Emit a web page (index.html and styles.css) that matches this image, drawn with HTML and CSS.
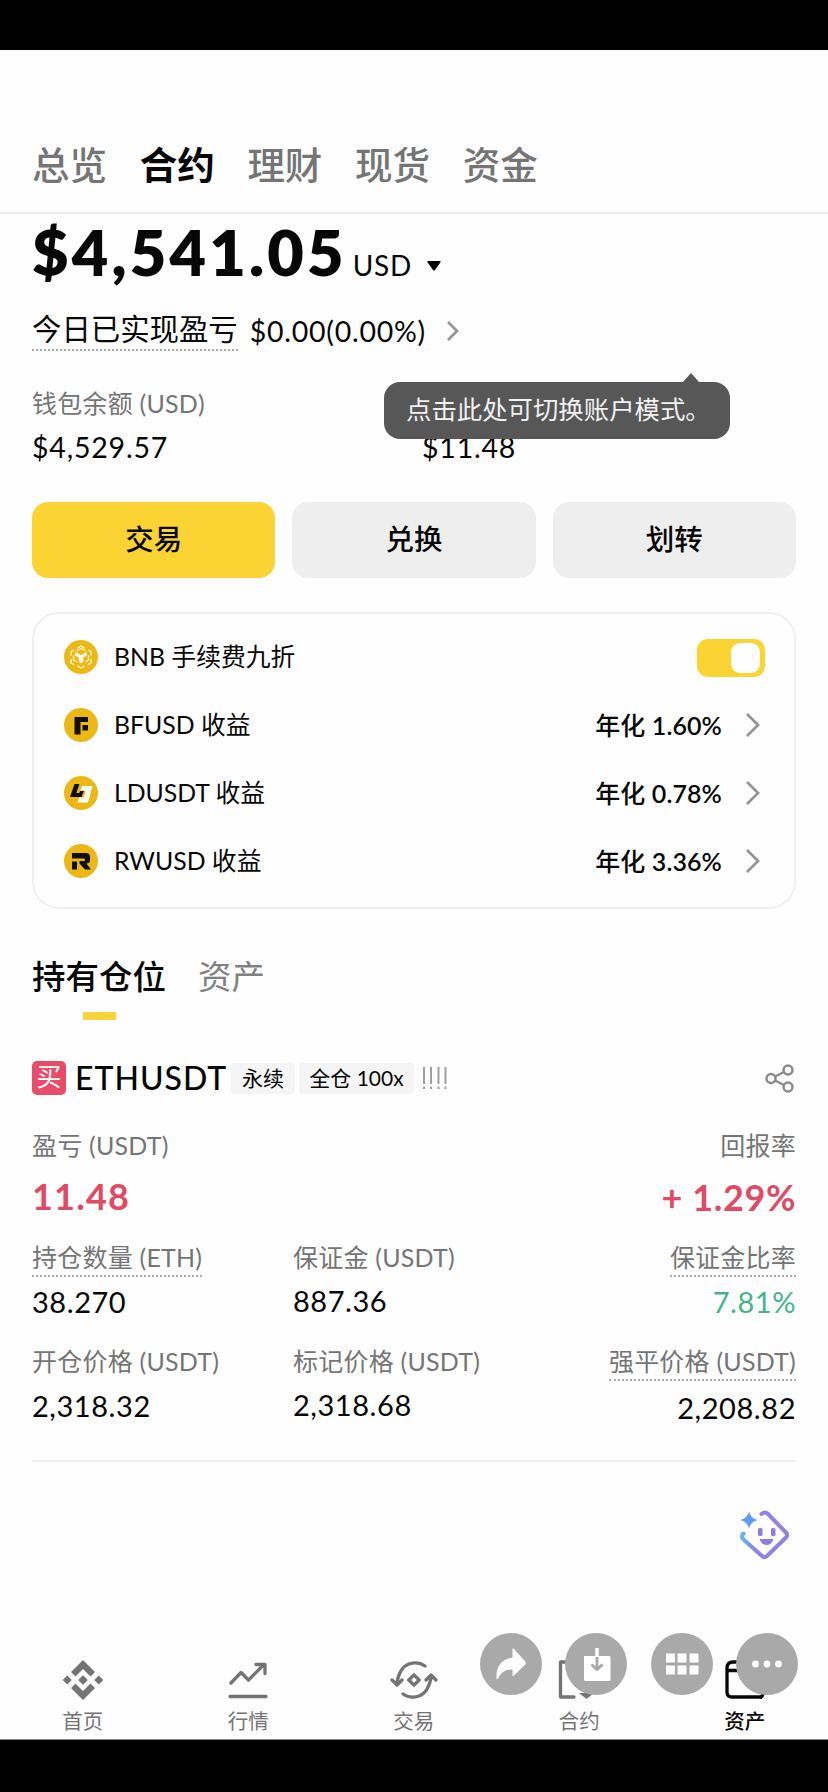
FILE: index.html
```html
<!DOCTYPE html>
<html lang="zh-CN">
<head>
<meta charset="utf-8">
<title>合约资产</title>
<link rel="stylesheet" href="styles.css">
</head>
<body>
<div class="screen">
  <div class="letterbox letterbox-top"></div>
  <header class="tabs">
    <span>总览</span><span class="on">合约</span><span>理财</span><span>现货</span><span>资金</span>
  </header>

  <main class="content">
    <div class="amount"><b>$4,541.05</b><span>USD</span><svg width="14" height="10" viewBox="0 0 14 10"><path d="M1.5 0h11q2 0 .8 1.6L8 9q-1 1.200-2 0L.7 1.600Q-.5 0 1.500 0z"/></svg></div>

    <div class="pnl">
      <span class="dotted">今日已实现盈亏</span><span class="pnl-value">$0.00(0.00%)</span>
      <svg width="14" height="22" viewBox="0 0 14 22" class="chev"><path d="M2 2l9 9-9 9"/></svg>
    </div>

    <section class="balances">
      <div><p class="label">钱包余额 (USD)</p><p class="num">$4,529.57</p></div>
      <div><p class="label">&nbsp;</p><p class="num">$11.48</p></div>
      <div class="tip">点击此处可切换账户模式。</div>
    </section>

    <div class="actions"><button class="primary">交易</button><button>兑换</button><button>划转</button></div>

    <section class="card">
      <div class="row">
        <svg width="34" height="34" viewBox="0 0 34 34"><circle cx="17" cy="17" r="17" fill="#ecb816"/><g fill="none" stroke="#fff3c4" stroke-width="1.400" stroke-linejoin="round"><path d="M13 8.300L17 6l4 2.300M24 10l3 1.700v4M27 19v4l-3 1.700M20.500 26L17 28l-3.500-2M10 24.700L7 23v-4M7 15.700v-4L10 10"/><path d="M12.500 11L17 8.500l4.500 2.500M9.500 15.500v4.500l3 1.800M24.500 15.500v4.500l-3 1.800"/></g><path d="M11 12l3 1.300 3 1.700 3-1.700 3-1.300v3.600l-3.700 2.200v4.300L17 23.600l-2.300-1.500v-4.300L11 15.600z" fill="#fff8dd"/></svg>
        <span class="name">BNB 手续费九折</span><i class="switch"></i>
      </div>
      <div class="row">
        <svg width="34" height="34" viewBox="0 0 34 34"><circle cx="17" cy="17" r="17" fill="#ecb816"/><path d="M10.500 9H24v5h-7.500v12.500h-6zM18.500 17H24v5.500h-5.500z" fill="#120f08"/></svg>
        <span class="name">BFUSD 收益</span><span class="apr">年化 <b>1.60%</b></span><svg width="16" height="26" viewBox="0 0 16 26" class="chev"><path d="M2 2l11 11L2 24"/></svg>
      </div>
      <div class="row">
        <svg width="34" height="34" viewBox="0 0 34 34"><circle cx="17" cy="17" r="17" fill="#ecb816"/><path d="M18 10h10.500L24 26.500H13.500l1.800-5h4.500l1.800-7h-5z" fill="#fff"/><path d="M10.500 8h5l-3.200 9h3l.8-2h3.800l-2.400 6H6z" fill="#120f08"/></svg>
        <span class="name">LDUSDT 收益</span><span class="apr">年化 <b>0.78%</b></span><svg width="16" height="26" viewBox="0 0 16 26" class="chev"><path d="M2 2l11 11L2 24"/></svg>
      </div>
      <div class="row">
        <svg width="34" height="34" viewBox="0 0 34 34"><circle cx="17" cy="17" r="17" fill="#ecb816"/><path d="M8 9h14q4 0 4 4v3q0 3.500-3.500 3.500L27 25.500h-6l-5.500-6V17H20q1 0 1-1.200T20 14.500H8zM8 17.500h5v8H8z" fill="#120f08"/></svg>
        <span class="name">RWUSD 收益</span><span class="apr">年化 <b>3.36%</b></span><svg width="16" height="26" viewBox="0 0 16 26" class="chev"><path d="M2 2l11 11L2 24"/></svg>
      </div>
    </section>

    <div class="subtabs"><span class="on">持有仓位</span><span>资产</span></div>

    <div class="symbol">
      <span class="side">买</span><span class="pair">ETHUSDT</span><span class="tag perp">永续</span><span class="tag lev">全仓 100x</span>
      <svg class="risk" width="26" height="23" viewBox="0 0 26 23"><path d="M2 0v17M9 0v17M16.500 0v17M23.500 0v17M2 19.500v2.500M9 19.500v2.500M16.500 19.500v2.500M23.500 19.500v2.500"/></svg>
      <svg class="share" width="29" height="29" viewBox="0 0 29 29"><g fill="none" stroke="#8a8a8a" stroke-width="2.500"><circle cx="6" cy="14.500" r="4.500"/><circle cx="23" cy="6" r="4.500"/><circle cx="23" cy="23" r="4.500"/><path d="M10 12.500l9-4.500M10 16.500l9 4.500"/></g></svg>
    </div>

    <section class="stats head">
      <div><p class="label">盈亏 (USDT)</p><p class="num big">11.48</p></div>
      <div></div>
      <div><p class="label">回报率</p><p class="num big roi">+ 1.29%</p></div>
    </section>
    <section class="stats">
      <div><p class="label dotted">持仓数量 (ETH)</p><p class="num">38.270</p></div>
      <div><p class="label">保证金 (USDT)</p><p class="num high">887.36</p></div>
      <div><p class="label dotted">保证金比率</p><p class="num green">7.81%</p></div>
    </section>
    <section class="stats last">
      <div><p class="label">开仓价格 (USDT)</p><p class="num">2,318.32</p></div>
      <div><p class="label">标记价格 (USDT)</p><p class="num high">2,318.68</p></div>
      <div><p class="label dotted">强平价格 (USDT)</p><p class="num low">2,208.82</p></div>
    </section>
  </main>

  <nav class="nav">
    <a><svg width="48" height="48" viewBox="0 0 48 48"><path fill="#747474" d="M24 4l12 12-4.500 4.500L24 13l-7.500 7.500L12 16zM24 44l12-12-4.500-4.500L24 35l-7.500-7.500L12 32zM24 19.200l4.800 4.800-4.800 4.800-4.800-4.800zM8.300 19.500l4.500 4.500-4.500 4.500L3.800 24zM39.700 19.500l4.500 4.500-4.500 4.500-4.500-4.500z"/></svg>首页</a>
    <a><svg width="48" height="48" viewBox="0 0 48 48"><path d="M7 27L17 16.500l7.500 7.500L40 8.500M32 8.500h9v9M6 40.500h36"/></svg>行情</a>
    <a><svg width="48" height="48" viewBox="0 0 48 48"><path d="M35 10Q28 5 19 8T7 26M2 24l5 5 5-5M13 38q7 5 16 2t12-18M36 24l5-5 5 5M24 18.800l5.200 5.200-5.200 5.200-5.200-5.200z"/></svg>交易</a>
    <a><svg width="48" height="48" viewBox="0 0 48 48"><path d="M19 41H5.500V6H22"/><path fill="#747474" d="M24 37h15l-7.500 6z" stroke="none"/></svg>合约</a>
    <a class="on"><svg width="48" height="48" viewBox="0 0 48 48"><path d="M40 41H11q-5 0-5-5V12q0-6 6-6h28M6 14.500h34"/><path d="M40 41q2-1 2-4"/></svg>资产</a>
  </nav>
  <div class="letterbox letterbox-bottom"></div>

  <svg class="assistant" width="50" height="50" viewBox="0 0 50 50">
    <defs><linearGradient id="g" gradientUnits="userSpaceOnUse" x1="2" y1="25" x2="48" y2="25"><stop offset="0" stop-color="#69b4f0"/><stop offset=".3" stop-color="#8a84e6"/><stop offset="1" stop-color="#9382e0"/></linearGradient></defs>
    <path d="M3.500 23.500q-3 3 0 6L22 46q2.500 2.300 5 0l19-18.500q2.500-2.500 0-5L28 4q-3-3-6.500 0" fill="none" stroke="url(#g)" stroke-width="4" stroke-linecap="round"/>
    <path d="M9 1.500q1.500 6.500 8.500 8.500-7 2-8.500 8.500Q7.500 12 .5 10 7.500 8 9 1.500z" fill="#609cf6"/>
    <rect x="18" y="18" width="4.500" height="8" rx="1.500" fill="#8c7edb"/><rect x="31" y="18" width="4.500" height="8" rx="1.500" fill="#8c7edb"/><path d="M19.500 29h14q-2 6-7 6t-7-6z" fill="#8c7edb"/>
  </svg>

  <div class="float">
    <i><svg viewBox="0 0 62 62"><path fill="#fff" d="M32.500 16.500q0-2 1.500-.6L45 28.300q1.500 1.700 0 3.400L34 42.600q-1.500 1.400-1.500-.6v-5.500q-10-.5-14.500 9-1 1.500-1.500-.3-1-17.500 16-20.700z"/></svg></i>
    <i><svg viewBox="0 0 62 62"><path fill="#fff" d="M19.500 23h25q1 0 1 1v23q0 1-1 1h-24q-1.500 0-1.500-1.500V24q0-1 .5-1z"/><path d="M32 15v10" stroke="#fff" stroke-width="3.500"/><path d="M32 24v12M26.500 31.500l5.500 5 5.500-5" fill="none" stroke="#a9a9a9" stroke-width="2.800"/></svg></i>
    <i><svg viewBox="0 0 62 62" fill="#fff"><path d="M15 20.500h9v9h-9zM26.500 20.500h9v9h-9zM38.500 20.500h9v9h-9zM15 32.500h9v9h-9zM26.500 32.500h9v9h-9zM38.500 32.500h9v9h-9z"/></svg></i>
    <i><svg viewBox="0 0 62 62" fill="#fff"><circle cx="19.500" cy="31" r="3.400"/><circle cx="31" cy="31" r="3.400"/><circle cx="42.500" cy="31" r="3.400"/></svg></i>
  </div>
</div>
</body>
</html>
```
FILE: styles.css
```css
* { box-sizing: border-box; margin: 0; padding: 0; }
body { background: #fefefe; color: #070707; font-family: Lato, "Noto Sans CJK SC", sans-serif; }
svg { display: block; flex: none; }
i { font-style: normal; }
.screen { position: relative; width: 828px; height: 1792px; display: flex; flex-direction: column; overflow: hidden; }
.letterbox { background: #000; flex: none; }
.letterbox-top { height: 50px; }
.letterbox-bottom { height: 53px; border-top: 1px solid #888; }

.tabs { height: 164px; flex: none; border-bottom: 2px solid #ebebeb; padding: 92px 32px 0; display: flex; gap: 32.700px; font-size: 37.500px; line-height: 46px; font-weight: 500; color: #757575; }
.tabs .on { color: #070707; font-weight: 700; }

.content { padding: 0 32px; flex: none; }
.amount { height: 74px; line-height: 76px; display: flex; align-items: baseline; }
.amount b { font-size: 63px; letter-spacing: 3.200px; font-weight: 800; }
.amount span { font-size: 28px; margin-left: 6px; letter-spacing: .7px; }
.amount svg { margin-left: 15px; transform: translateY(-5px); }
.pnl { height: 40px; margin-top: 23px; display: flex; line-height: 36px; align-items: flex-start; }
.dotted { border-bottom: 2px dotted #aaa; }
.pnl .dotted { font-size: 29.400px; height: 40px; }
.pnl-value { font-size: 28.500px; margin-left: 12px; line-height: 40px; letter-spacing: .75px; }
.chev { fill: none; stroke: #969696; stroke-width: 2.800; }
.pnl .chev { margin: 9px 0 0 20px; }

.balances { position: relative; margin-top: 36px; display: grid; grid-template-columns: 390px 1fr; }
.label { font-size: 25px; line-height: 34px; height: 34px; color: #757575; white-space: nowrap; letter-spacing: .22px; }
.balances .label { line-height: 32px; }
.num { font-size: 29px; line-height: 34px; height: 34px; white-space: nowrap; letter-spacing: .55px; }
.balances .num { margin-top: 9px; font-size: 28.500px; letter-spacing: .8px; }
.num.low { padding-top: 2px; }
.tip { position: absolute; left: 352px; top: -5px; width: 346px; height: 57px; border-radius: 16px; background: #575757; color: #f1f1f1; font-size: 25.400px; line-height: 55px; padding-left: 22px; white-space: nowrap; }
.tip::before { content: ""; position: absolute; left: 299px; top: -9px; border: solid transparent; border-width: 0 8px 9px; border-bottom-color: #575757; }

.actions { margin-top: 38px; display: grid; grid-template-columns: 1fr 1fr 1fr; gap: 17px; }
.actions button { height: 76px; border: 0; border-radius: 16px; background: #eee; font: 500 28.500px/72px Lato, "Noto Sans CJK SC", sans-serif; color: #070707; padding-bottom: 2px; }
.actions .primary { background: #fbd433; }

.card { margin-top: 34px; height: 297px; border: 2px solid #efefef; border-radius: 27px; padding: 9px 29px 0 29.500px; }
.row { height: 68px; display: flex; align-items: center; }
.name { margin-left: 16.500px; font-size: 24.800px; flex: 1; line-height: 34px; padding-bottom: 1px; }
.switch { width: 68px; height: 38px; border-radius: 11px; background: #fbd433; padding: 4px 5px; display: flex; justify-content: flex-end; margin-top: 2px; }
.switch::after { content: ""; width: 29px; height: 30px; border-radius: 9px; background: #fff; }
.apr { font-size: 25px; font-weight: 500; line-height: 34px; padding-bottom: 1px; letter-spacing: .1px; }
.apr b { font-weight: 600; }
.row .chev { margin: 0 4px 0 23px; }

.subtabs { margin-top: 47px; display: flex; gap: 32px; font-size: 33.500px; line-height: 40px; height: 64px; color: #808080; }
.subtabs .on { color: #070707; font-weight: 500; display: flex; flex-direction: column; align-items: center; justify-content: space-between; }
.subtabs .on::after { content: ""; width: 33px; height: 8px; background: #f9d33a; border-radius: 1px; }

.symbol { margin-top: 41px; height: 34px; display: flex; align-items: center; }
.side { width: 34px; height: 34px; border-radius: 5px; background: #e84c69; color: #fff; font-size: 25px; line-height: 31px; text-align: center; }
.pair { font-size: 32px; font-weight: 500; letter-spacing: 1px; margin-left: 9px; width: 156px; line-height: 34px; white-space: nowrap; }
.tag { height: 31px; line-height: 30px; font-size: 21px; background: #f5f5f5; border-radius: 4px; text-align: center; white-space: nowrap; }
.perp { width: 64px; }
.lev { width: 115px; margin-left: 4px; }
.risk { margin-left: 8px; stroke: #a0a0a0; stroke-width: 2; }
.share { margin-left: auto; margin-right: 2px; }

.stats { margin-top: 25px; display: grid; grid-template-columns: 261px 261px 1fr; }
.stats > div { display: flex; flex-direction: column; align-items: flex-start; }
.stats > div:last-child { align-items: flex-end; }
.stats .label { height: 37px; line-height: 35px; }
.stats .num { margin-top: 8px; }
.stats .num.high { margin-top: 7px; margin-bottom: 1px; }
.head { margin-top: 33px; }
.head .label { height: 34px; line-height: 34px; }
.stats .big { margin-top: 13px; font-size: 36px; line-height: 42px; height: 40px; font-weight: 700; color: #e04a64; letter-spacing: 1.200px; }
.stats .roi { line-height: 44px; letter-spacing: .6px; }
.green { color: #43b58d; }
.last { padding-bottom: 37px; border-bottom: 2px solid #f0f0f0; }

.nav { margin-top: auto; padding: 0; height: 83px; display: grid; grid-template-columns: repeat(5, 165.500px); font-size: 20.500px; color: #747474; }
.nav a { display: flex; flex-direction: column; align-items: center; line-height: 34px; }
.nav svg { fill: none; stroke: #747474; stroke-width: 3.300; stroke-linecap: round; stroke-linejoin: round; }
.nav a:first-child svg { stroke: none; }
.nav .on { color: #070707; font-weight: 500; }
.nav .on svg { stroke: #070707; }

.assistant { position: absolute; left: 740px; top: 1510px; }
.float { position: absolute; left: 480px; top: 1633px; display: flex; gap: 23.300px; }
.float i { width: 62px; height: 62px; border-radius: 50%; background: #a9a9a9; }
```
